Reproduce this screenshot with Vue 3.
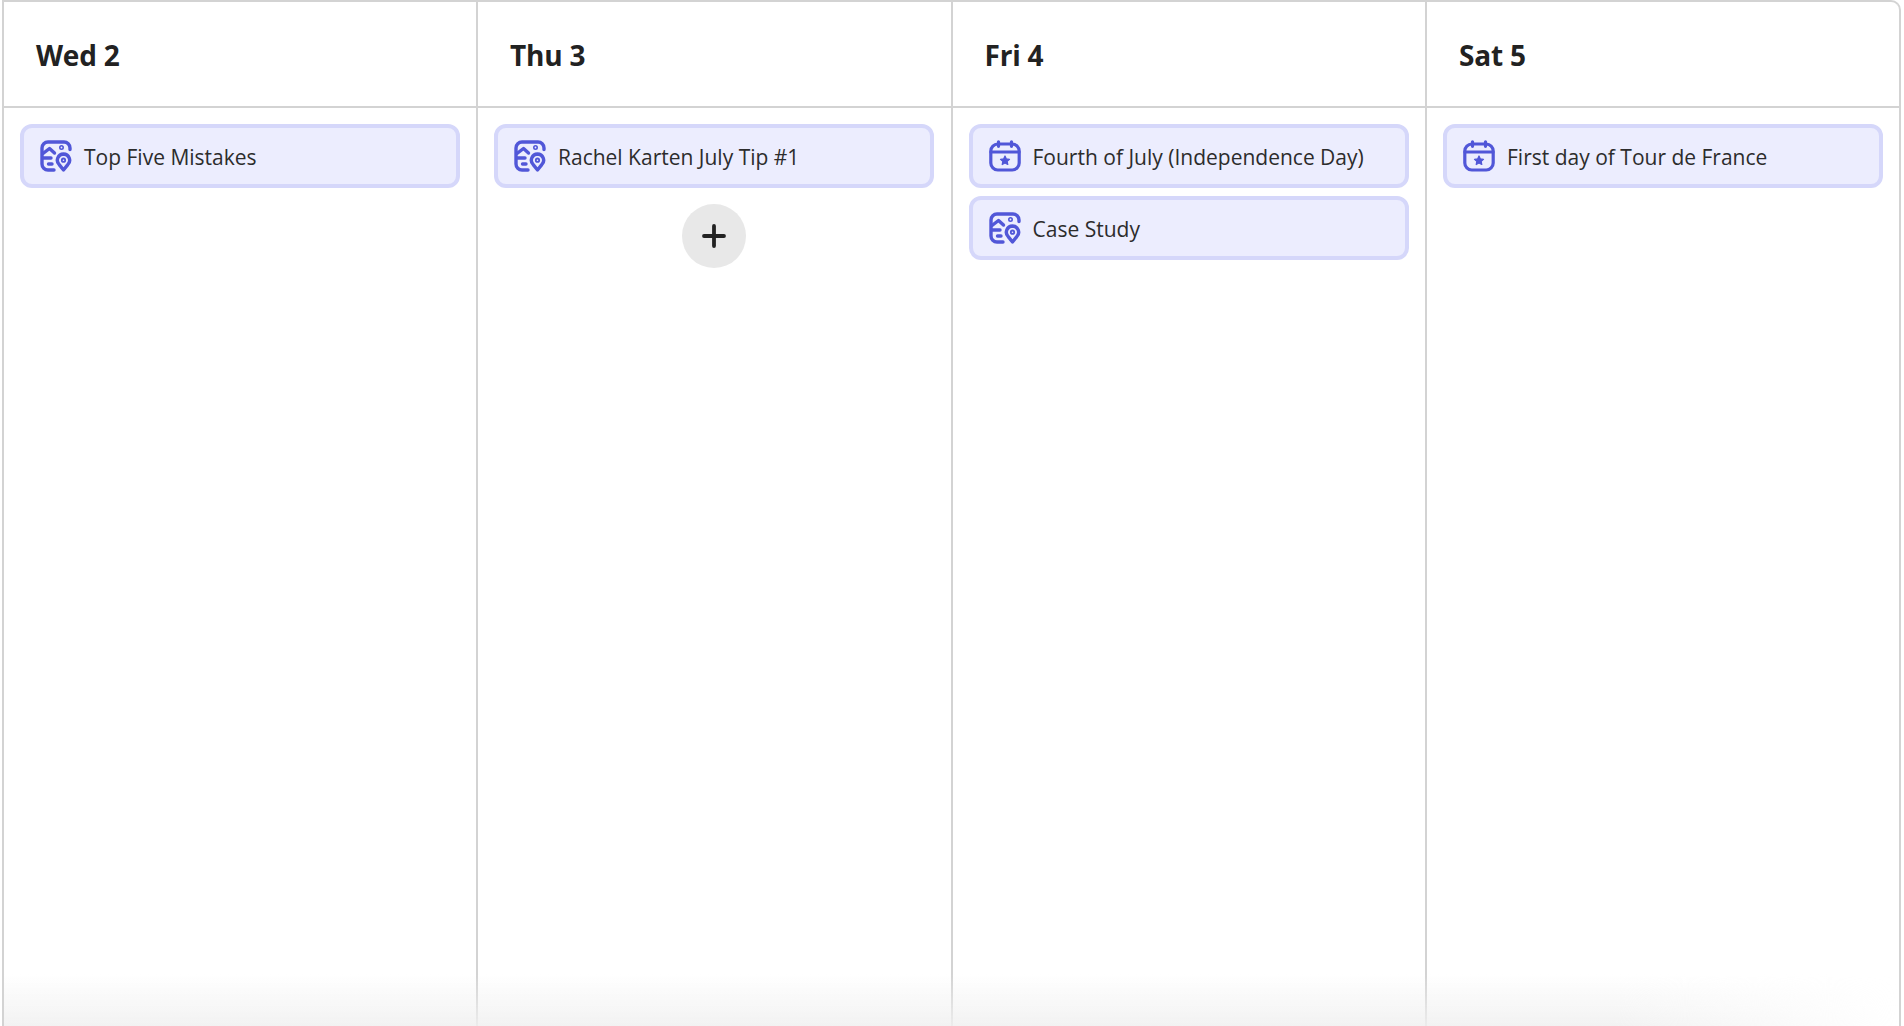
<script setup>
const days = [
  { label: 'Wed 2', items: [{ type: 'idea', title: 'Top Five Mistakes' }] },
  { label: 'Thu 3', items: [{ type: 'idea', title: 'Rachel Karten July Tip #1' }], showAdd: true },
  {
    label: 'Fri 4',
    items: [
      { type: 'event', title: 'Fourth of July (Independence Day)' },
      { type: 'idea', title: 'Case Study' }
    ]
  },
  { label: 'Sat 5', items: [{ type: 'event', title: 'First day of Tour de France' }] }
];
</script>

<template>
  <div class="calendar">
    <section v-for="day in days" :key="day.label" class="day">
      <header class="day-head">{{ day.label }}</header>
      <div class="day-body">
        <div v-for="item in day.items" :key="item.title" class="card">
          <svg v-if="item.type === 'idea'" class="icon" viewBox="0 0 32 32" fill="none" stroke="#5157d8" stroke-width="3.4" stroke-linecap="round" stroke-linejoin="round">
            <path d="M30 9.5V8a6 6 0 0 0-6-6H8a6 6 0 0 0-6 6v16a6 6 0 0 0 6 6h6" />
            <path d="M3 13.5 9.5 8.5l5 4.5" />
            <path d="M3 18h8" />
            <path d="M8.5 24h3.5" />
            <circle cx="21.5" cy="7.5" r="0.8" />
            <path d="M23.5 14a6.2 6.2 0 0 1 4.3 10.6L23.5 30l-4.3-5.4A6.2 6.2 0 0 1 23.5 14z" />
            <circle cx="23.5" cy="20.2" r="0.9" />
          </svg>
          <svg v-else class="icon" viewBox="0 0 32 32" fill="none" stroke="#5157d8" stroke-width="3.2" stroke-linecap="round" stroke-linejoin="round">
            <rect x="1.8" y="4" width="28.4" height="26" rx="7" />
            <path d="M2 12h28" />
            <path d="M9.5 1.8v4.5M22.5 1.8v4.5" />
            <path d="m16 16 1.4 2.9 3.1.4-2.3 2.1.6 3.1-2.8-1.5-2.8 1.5.6-3.1-2.3-2.1 3.1-.4z" fill="#5157d8" stroke-width="1.2" />
          </svg>
          <span class="card-title">{{ item.title }}</span>
        </div>
        <button v-if="day.showAdd" class="add-btn" type="button" aria-label="Add">
          <svg viewBox="0 0 24 24" width="24" height="24" stroke="#222" stroke-width="3.8" stroke-linecap="round">
            <path d="M12 2v20M2 12h20" />
          </svg>
        </button>
      </div>
    </section>
    <div class="fade"></div>
  </div>
</template>

<style>
html,
body {
  background: #fff;
  overflow: hidden;
}
</style>

<style scoped>
.calendar {
  position: relative;
  box-sizing: border-box;
  display: grid;
  grid-template-columns: 474px 474.5px 474.5px 1fr;
  width: 1899px;
  height: 1026px;
  margin-left: 2px;
  border: 2px solid #d3d3d3;
  border-bottom: 0;
  border-top-right-radius: 10px;
  font-family: "Open Sans", "Noto Sans", sans-serif;
  color: #222;
}

.day {
  display: flex;
  flex-direction: column;
  min-width: 0;
  border-right: 2px solid #d3d3d3;
}

.day:last-of-type {
  border-right: 0;
}

.day-head {
  box-sizing: border-box;
  height: 106px;
  padding: 2px 0 0 32px;
  border-bottom: 2px solid #d3d3d3;
  display: flex;
  align-items: center;
  font-size: 28px;
  font-weight: 700;
  letter-spacing: -0.2px;
}

.day-body {
  display: flex;
  flex-direction: column;
  align-items: center;
  gap: 8px;
  width: 440px;
  padding: 16px 0 0 16px;
}

.card {
  box-sizing: border-box;
  width: 100%;
  height: 64px;
  display: flex;
  align-items: center;
  gap: 12px;
  padding-left: 16px;
  background: #ecedfe;
  border: 4px solid #d5d7fa;
  border-radius: 12px;
}

.icon {
  width: 32px;
  height: 32px;
  flex: none;
}

.card-title {
  padding-top: 1px;
  font-size: 21px;
  color: #2c2c2c;
}

.add-btn {
  width: 64px;
  height: 64px;
  margin-top: 8px;
  padding: 0;
  border: 0;
  border-radius: 50%;
  background: #e8e8e8;
  display: flex;
  align-items: center;
  justify-content: center;
}

.fade {
  position: absolute;
  left: 0;
  right: 0;
  bottom: 0;
  height: 52px;
  background: linear-gradient(to bottom, rgba(240, 240, 240, 0), rgba(240, 240, 240, 0.85));
  -webkit-mask-image: linear-gradient(to right, #000 85%, transparent);
  mask-image: linear-gradient(to right, #000 85%, transparent);
  pointer-events: none;
}
</style>
